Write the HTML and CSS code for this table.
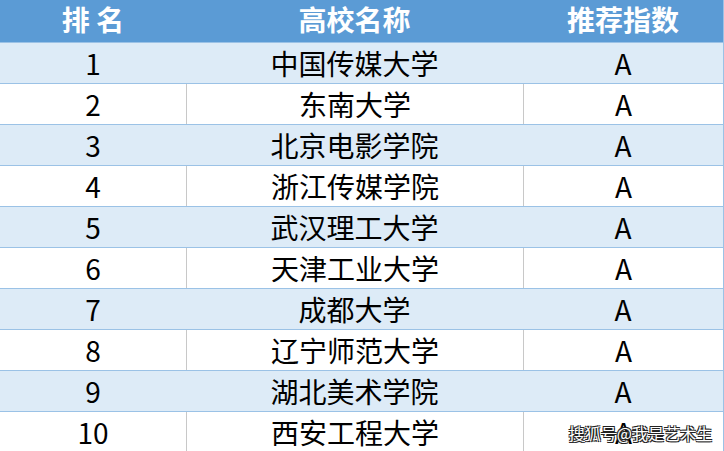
FILE: index.html
```html
<!DOCTYPE html>
<html lang="zh">
<head>
<meta charset="utf-8">
<link rel="stylesheet" href="styles.css">
</head>
<body>
<div class="sheet">
  <div class="row head">
    <div class="cell">排 名</div>
    <div class="cell">高校名称</div>
    <div class="cell">推荐指数</div>
  </div>
  <div class="row tint"><div class="cell">1</div><div class="cell">中国传媒大学</div><div class="cell">A</div></div>
  <div class="row plain"><div class="cell">2</div><div class="cell">东南大学</div><div class="cell">A</div></div>
  <div class="row tint"><div class="cell">3</div><div class="cell">北京电影学院</div><div class="cell">A</div></div>
  <div class="row plain"><div class="cell">4</div><div class="cell">浙江传媒学院</div><div class="cell">A</div></div>
  <div class="row tint"><div class="cell">5</div><div class="cell">武汉理工大学</div><div class="cell">A</div></div>
  <div class="row plain"><div class="cell">6</div><div class="cell">天津工业大学</div><div class="cell">A</div></div>
  <div class="row tint"><div class="cell">7</div><div class="cell">成都大学</div><div class="cell">A</div></div>
  <div class="row plain"><div class="cell">8</div><div class="cell">辽宁师范大学</div><div class="cell">A</div></div>
  <div class="row tint"><div class="cell">9</div><div class="cell">湖北美术学院</div><div class="cell">A</div></div>
  <div class="row plain"><div class="cell">10</div><div class="cell">西安工程大学</div><div class="cell">A</div></div>
  <div class="watermark">搜狐号@我是艺术生</div>
</div>
</body>
</html>
```
FILE: styles.css
```css
html, body {
  margin: 0;
  padding: 0;
  background: #ffffff;
}
.sheet {
  position: relative;
  width: 724px;
  height: 451px;
  overflow: hidden;
  font-family: "Noto Sans CJK SC", "Noto Sans", sans-serif;
  color: #000;
}
.row {
  display: grid;
  grid-template-columns: 186px 337px 1fr;
  height: 40px;
  border-top: 1px solid #9bc2e6;
  border-right: 1px solid #9bc2e6;
}
.row.head {
  height: 42px;
  border-top: none;
  background: #5b9bd5;
  color: #fff;
  font-weight: 700;
}
.row.tint {
  background: #ddebf7;
}
.row.plain {
  background: #fff;
}
.row.plain .cell + .cell {
  border-left: 1px solid #c8c8c8;
}
.cell {
  display: flex;
  align-items: center;
  justify-content: center;
  font-size: 28px;
  line-height: 1;
  white-space: pre;
}
.head .cell {
  font-size: 28px;
  padding-bottom: 4px;
}
.watermark {
  position: absolute;
  right: 12px;
  bottom: 6px;
  font-size: 16px;
  color: #fff;
  text-shadow: 1px 1px 0 #222, -1px -1px 0 #222, 1px -1px 0 #222, -1px 1px 0 #222;
}
```
